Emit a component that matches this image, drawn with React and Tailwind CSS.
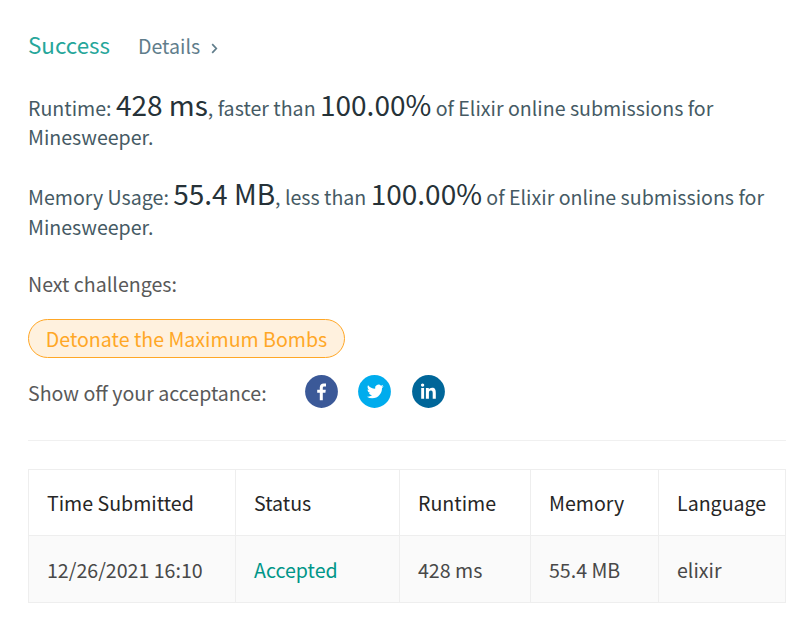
import React from "react";

const columns = [
  { label: "Time Submitted", value: "12/26/2021 16:10", width: "w-[207px]" },
  { label: "Status", value: "Accepted", width: "w-[164px]", accent: true },
  { label: "Runtime", value: "428 ms", width: "w-[131px]" },
  { label: "Memory", value: "55.4 MB", width: "w-[128px]" },
  { label: "Language", value: "elixir", width: "w-[127px]" },
];

function Big({ children }) {
  return <span className="text-[28px] leading-none text-[#263238]">{children}</span>;
}

function Social({ color, label, children }) {
  return (
    <svg className="h-[33px] w-[33px]" viewBox="0 0 33 33" role="img" aria-label={label}>
      <circle cx="16.5" cy="16.5" r="16.4" fill={color} />
      {children}
    </svg>
  );
}

export default function App() {
  return (
    <main className="h-[629px] w-[811px] overflow-hidden bg-white pl-7 pr-[25px] pt-[29px] font-['Noto_Sans_CJK_SC','Noto_Sans',sans-serif] text-[19.6px] leading-[30px] text-[#595959]">
      <header className="flex h-[30px] items-baseline">
        <h1 className="w-[110px] text-[22.4px] text-[#26a69a]">Success</h1>
        <a className="flex items-center text-[#607d8b]">
          Details
          <svg className="ml-[11px] mt-[4px] h-[11px] w-[7px]" viewBox="0 0 7 11" fill="none" stroke="currentColor" strokeWidth="1.7">
            <path d="M1.2 1.1 5.3 5.5l-4.1 4.4" />
          </svg>
        </a>
      </header>

      <p className="mt-[31px] h-[60px] leading-[29px] text-[#455a64]">
        Runtime: <Big>428 ms</Big>, faster than <Big>100.00%</Big> of Elixir online submissions for Minesweeper.
      </p>
      <p className="mt-[29px] h-[60px] text-[#455a64]">
        Memory Usage: <Big>55.4 MB</Big>, less than <Big>100.00%</Big> of Elixir online submissions for Minesweeper.
      </p>

      <p className="mt-[30px]">Next challenges:</p>
      <div className="mt-5 flex h-[39px] w-[317px] items-center justify-center rounded-full border border-[#ffa726] bg-[#fff1de] text-[#ffa726]">
        Detonate the Maximum Bombs
      </div>

      <div className="mt-[17px] flex h-[33px] items-center">
        <span className="mt-[3px] w-[277px]">Show off your acceptance:</span>
        <div className="flex gap-[20.3px]">
          <Social color="#3b5998" label="Facebook">
            <path fill="#fff" d="M17.8 25.3v-7.5h2.6l.4-3h-3v-1.9c0-.9.3-1.5 1.5-1.5H21V8.6c-.3 0-1.2-.1-2.3-.1-2.3 0-3.9 1.4-3.9 4v2.3h-2.6v3h2.6v7.5z" />
          </Social>
          <Social color="#00aced" label="Twitter">
            <path fill="#fff" transform="translate(8.9 8) scale(.7)" d="M23.95 4.57a10 10 0 0 1-2.82.77 4.96 4.96 0 0 0 2.16-2.72c-.95.55-2 .95-3.13 1.18a4.92 4.92 0 0 0-8.38 4.48C7.69 8.1 4.07 6.13 1.64 3.16a4.82 4.82 0 0 0-.67 2.48c0 1.71.87 3.21 2.19 4.1a4.9 4.9 0 0 1-2.23-.62v.06a4.92 4.92 0 0 0 3.95 4.83 4.96 4.96 0 0 1-2.21.08 4.94 4.94 0 0 0 4.6 3.42A9.87 9.87 0 0 1 0 19.54a13.99 13.99 0 0 0 7.55 2.21c9.05 0 14-7.5 14-13.98 0-.21 0-.42-.02-.63a9.94 9.94 0 0 0 2.42-2.57z" />
          </Social>
          <Social color="#006699" label="LinkedIn">
            <path fill="#fff" transform="translate(-.4 0)" d="M9.6 13h2.9v10.8H9.6zM11 8.4a1.7 1.7 0 1 1 0 3.4 1.7 1.7 0 0 1 0-3.4zM14.3 13h2.9v1.5c.6-1 1.7-1.8 3.3-1.8 3.1 0 3.7 2.1 3.7 5v6.1h-3.1v-5.4c0-1.3 0-2.9-1.8-2.9s-2 1.4-2 2.8v5.5h-3z" />
          </Social>
        </div>
      </div>

      <hr className="mt-8 w-[758px] border-0 border-t border-[#f0f0f0]" />

      <table className="mt-7 w-[758px] table-fixed border-collapse text-left">
        <thead>
          <tr className="h-[66px]">
            {columns.map((c) => (
              <th key={c.label} className={`${c.width} border border-[#eeeeee] px-[18px] pb-0 pt-0 align-middle font-normal text-[#262626]`}>
                {c.label}
              </th>
            ))}
          </tr>
        </thead>
        <tbody>
          <tr className="h-[67px] bg-[#fafafa]">
            {columns.map((c) => (
              <td key={c.label} className={`border border-[#eeeeee] px-[18px] pb-0 pt-[2px] align-middle ${c.accent ? "text-[#009688]" : "text-[#484848]"}`}>
                {c.value}
              </td>
            ))}
          </tr>
        </tbody>
      </table>
    </main>
  );
}
